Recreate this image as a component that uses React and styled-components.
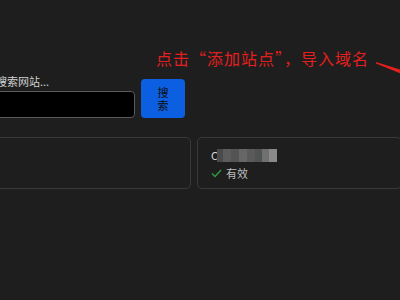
import React from "react";
import styled, { createGlobalStyle } from "styled-components";

const Global = createGlobalStyle`
  html, body { margin: 0; padding: 0; background: #1e1e1e; }
  body { font-family: "Noto Sans CJK SC", "Noto Sans", sans-serif; }
`;

const Page = styled.div`
  position: relative;
  width: 400px;
  height: 300px;
  overflow: hidden;
  background: #1e1e1e;
  padding-top: 74px;
  box-sizing: border-box;
`;

const SearchRow = styled.div`
  display: flex;
  align-items: flex-end;
  gap: 6px;
  margin-left: -5px;
`;

const Field = styled.div`
  display: flex;
  flex-direction: column;
  gap: 3px;
  padding-left: 1px;
`;

const Label = styled.div`
  font-size: 11px;
  line-height: 14px;
  color: #d0d0d0;
`;

const Input = styled.div`
  width: 139px;
  height: 27px;
  box-sizing: border-box;
  background: #000;
  border: 1.5px solid #5a5a5a;
  border-radius: 4px;
`;

const Button = styled.div`
  width: 44px;
  height: 39px;
  background: #0b5fe0;
  border-radius: 4px;
  display: flex;
  align-items: center;
  justify-content: center;
  color: #0d0d0d;
  font-size: 11px;
  line-height: 13px;
  text-align: center;
`;

const Stack = styled.span`
  display: block;
  width: 1em;
  word-break: break-all;
`;

const Cards = styled.div`
  display: grid;
  grid-template-columns: 205px 205px;
  gap: 6px;
  margin-top: 19px;
  margin-left: -14px;
`;

const Card = styled.div`
  height: 52px;
  box-sizing: border-box;
  border: 1.5px solid #393939;
  border-radius: 5px;
  padding: 10px 13px;
  display: flex;
  flex-direction: column;
  gap: 4px;
`;

const NameRow = styled.div`
  display: flex;
  align-items: center;
  height: 14px;
  font-size: 11px;
  color: #d8d8d8;
`;

const Mosaic = styled.div`
  display: flex;
  height: 13px;
  margin-left: -1px;
  filter: blur(0.4px);
`;

const Cell = styled.span`
  width: ${(p) => p.w}px;
  height: 100%;
  background: ${(p) => p.c};
`;

const Status = styled.div`
  display: flex;
  align-items: center;
  gap: 4px;
  font-size: 11px;
  line-height: 14px;
  color: #bdbdbd;
`;

const Annotation = styled.div`
  position: absolute;
  left: 156px;
  top: 48px;
  font-size: 16px;
  letter-spacing: 1px;
  line-height: 20px;
  color: #e41f1f;
  white-space: nowrap;
`;

const Arrow = styled.svg`
  position: absolute;
  left: 374px;
  top: 58px;
`;

const cells = [
  ["#4a4a4a", 6],
  ["#5c5c5c", 8],
  ["#545454", 8],
  ["#666", 8],
  ["#5a5a5a", 8],
  ["#4f5353", 7],
  ["#707070", 7],
  ["#8a8a8a", 8],
];

export default function App() {
  return (
    <>
      <Global />
      <Page>
        <SearchRow>
          <Field>
            <Label>搜索网站...</Label>
            <Input />
          </Field>
          <Button>
            <Stack>搜索</Stack>
          </Button>
        </SearchRow>
        <Cards>
          <Card />
          <Card>
            <NameRow>
              C
              <Mosaic>
                {cells.map(([c, w], i) => (
                  <Cell key={i} c={c} w={w} />
                ))}
              </Mosaic>
            </NameRow>
            <Status>
              <svg width="11" height="9" viewBox="0 0 11 9">
                <path d="M1 4.5 L4 7.5 L10 1" fill="none" stroke="#2f9e44" strokeWidth="1.4" />
              </svg>
              有效
            </Status>
          </Card>
        </Cards>
        <Annotation>点击“添加站点”，导入域名</Annotation>
        <Arrow width="30" height="20" viewBox="0 0 30 20">
          <polygon points="2,4 28,12 28,16 2,5.5" fill="#e41f1f" />
        </Arrow>
      </Page>
    </>
  );
}
